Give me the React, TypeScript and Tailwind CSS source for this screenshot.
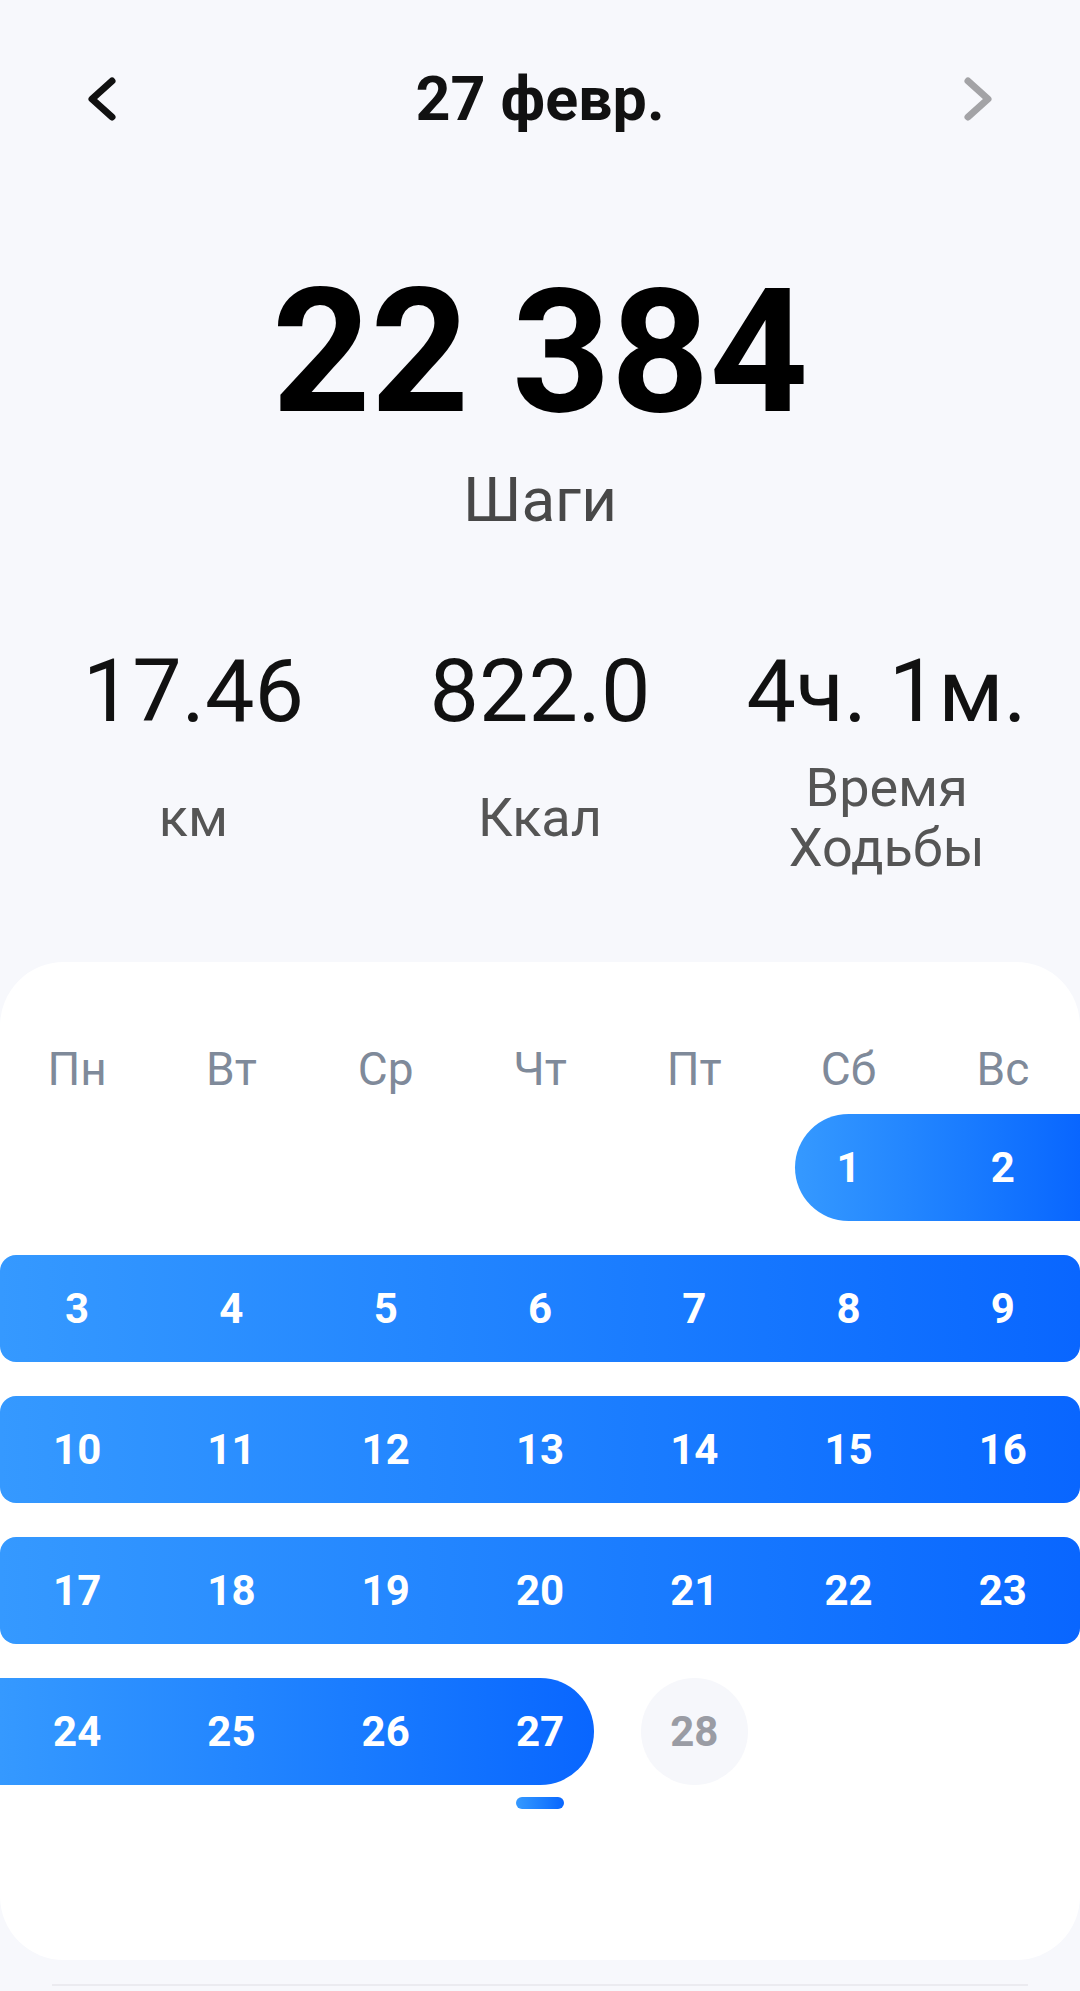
import React from 'react'

const weekDays = ['Пн', 'Вт', 'Ср', 'Чт', 'Пт', 'Сб', 'Вс']

function Chevron({ dir, color }: { dir: 'left' | 'right'; color: string }) {
  const pts = dir === 'left' ? '32,6 12,24 32,42' : '12,6 32,24 12,42'
  return (
    <svg width="44" height="48" viewBox="0 0 44 48" fill="none">
      <polyline points={pts} stroke={color} strokeWidth="7" strokeLinecap="round" strokeLinejoin="round" />
    </svg>
  )
}

function Day({ n, col, muted }: { n: number; col: string; muted?: boolean }) {
  return (
    <div className={`${col} row-start-1 flex items-center justify-center`}>
      {muted ? (
        <div className="w-[107px] h-[107px] rounded-full bg-[#f6f7fb] flex items-center justify-center text-[42px] font-bold text-[#9a9ca4] leading-none">
          {n}
        </div>
      ) : (
        <span className="text-[42px] font-bold text-white leading-none">{n}</span>
      )}
    </div>
  )
}

const cols = ['col-start-1', 'col-start-2', 'col-start-3', 'col-start-4', 'col-start-5', 'col-start-6', 'col-start-7']

export default function App() {
  return (
    <div className="w-[1080px] h-[1991px] bg-[#f7f8fc] font-['Roboto','Noto_Sans',sans-serif] flex flex-col overflow-hidden">
      {/* Header */}
      <div className="h-[198px] flex items-center justify-between px-[80px]">
        <Chevron dir="left" color="#111111" />
        <div className="text-[61px] font-bold text-[#111111] leading-none">27 февр.</div>
        <Chevron dir="right" color="#a3a3a6" />
      </div>

      <div className="mt-[68px] text-center text-[172px] font-bold text-black leading-none">22 384</div>
      <div className="mt-[31px] text-center text-[62px] text-[#484848] leading-none">Шаги</div>

      {/* Stats */}
      <div className="mt-[116px] px-[20px] grid grid-cols-3">
        {[
          { v: '17.46', l: <>км</> },
          { v: '822.0', l: <>Ккал</> },
          { v: '4ч. 1м.', l: <>Время<br />Ходьбы</> },
        ].map((s, i) => (
          <div key={i} className="flex flex-col items-center">
            <div className="text-[88px] text-[#111111] leading-none whitespace-nowrap">{s.v}</div>
            <div className="mt-[23px] h-[120px] flex items-center justify-center text-center text-[54px] leading-[60px] text-[#555555]">
              {s.l}
            </div>
          </div>
        ))}
      </div>

      {/* Calendar card */}
      <div className="mt-[84px] h-[998px] bg-white rounded-[64px] pt-[62px] flex flex-col">
        <div className="h-[90px] grid grid-cols-7">
          {weekDays.map((d) => (
            <div key={d} className="flex items-center justify-center text-[46px] text-[#7f8a9a] leading-none">
              {d}
            </div>
          ))}
        </div>

        <div className="flex flex-col gap-[34px]">
          {/* Row 1 */}
          <div className="h-[107px] grid grid-cols-7">
            <div className="col-start-6 col-end-8 row-start-1 ml-[23.6px] rounded-l-full rounded-r-[16px] bg-linear-to-r from-[#3599ff] to-[#0966ff]" />
            <Day n={1} col="col-start-6" />
            <Day n={2} col="col-start-7" />
          </div>
          {/* Full rows */}
          {[3, 10, 17].map((start) => (
            <div key={start} className="h-[107px] grid grid-cols-7">
              <div className="col-start-1 col-end-8 row-start-1 rounded-[16px] bg-linear-to-r from-[#3599ff] to-[#0966ff]" />
              {cols.map((c, i) => (
                <Day key={c} n={start + i} col={c} />
              ))}
            </div>
          ))}
          {/* Last row */}
          <div className="h-[107px] grid grid-cols-7">
            <div className="col-start-1 col-end-5 row-start-1 mr-[23.6px] rounded-l-[16px] rounded-r-full bg-linear-to-r from-[#3599ff] to-[#0966ff]" />
            <Day n={24} col="col-start-1" />
            <Day n={25} col="col-start-2" />
            <Day n={26} col="col-start-3" />
            <Day n={27} col="col-start-4" />
            <Day n={28} col="col-start-5" muted />
          </div>
        </div>

        <div className="mt-[12px] grid grid-cols-7">
          <div className="col-start-4 flex justify-center">
            <div className="w-[48px] h-[12px] rounded-full bg-linear-to-r from-[#3599ff] to-[#0966ff]" />
          </div>
        </div>
      </div>

      <div className="mt-[24px] mx-[52px] h-[2px] bg-[#ebebf0]" />
    </div>
  )
}
